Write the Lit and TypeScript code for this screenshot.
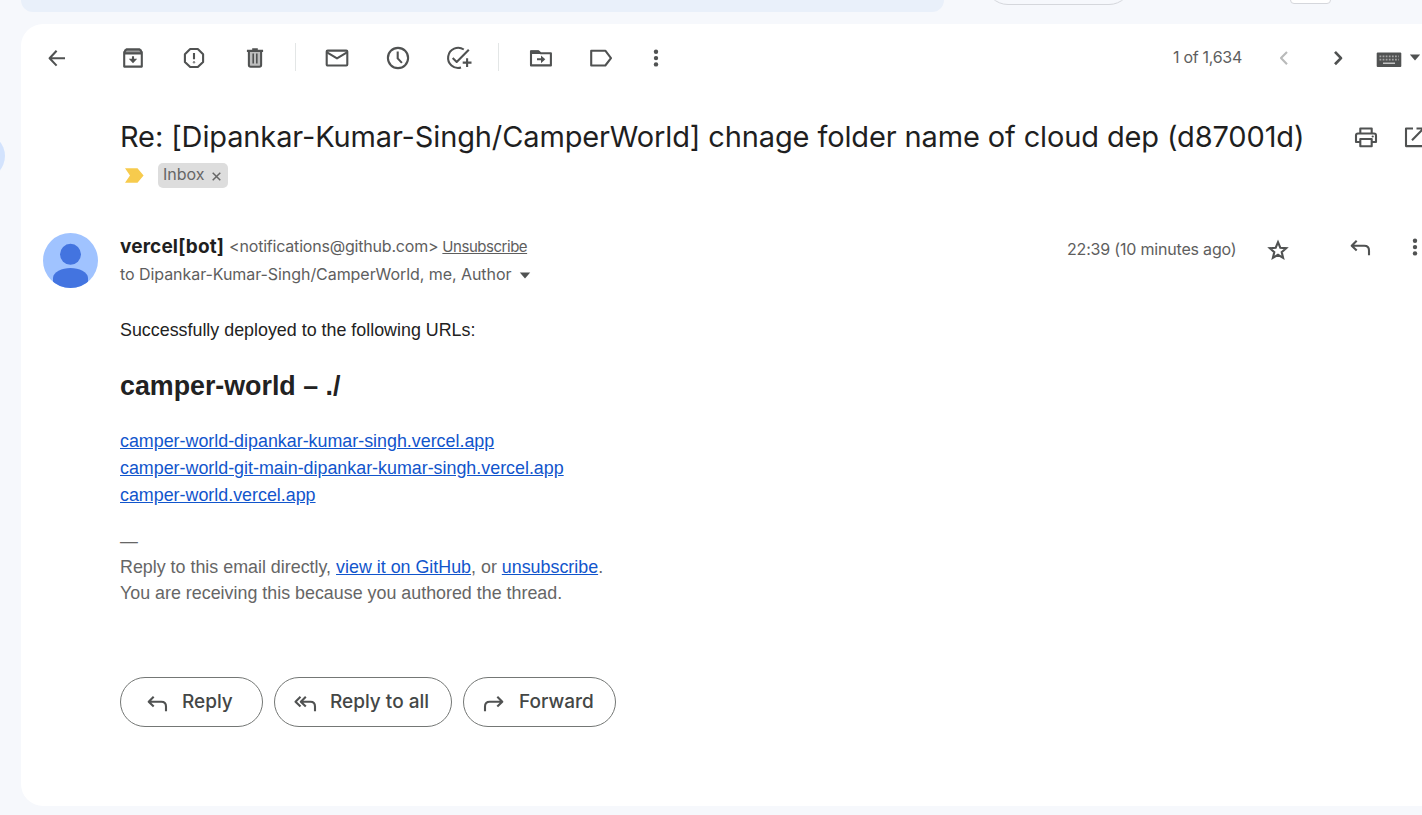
import { LitElement, html, css, svg } from "lit";
import { customElement } from "lit/decorators.js";

// All glyphs are drawn on a 28 x 28 grid.
const glyphs = {
  back: svg`<path class="s" d="M22 14.2H7.2M13.6 6.7L6.6 14.2l7 7.4"/>`,
  archive: svg`<path fill="#9a9b9b" d="M5 5.5h18v4.5H5z"/><path class="s" d="M5.2 8.2L7.4 5.4h13.2l2.2 2.8v14.4H5.2zM5.2 9.4h17.6"/><path class="s" d="M14 12.2v5"/><path class="f" d="M9.8 14.7h8.4L14 19.2z"/>`,
  spam: svg`<path class="s" d="M10.2 5h7.6l5.3 5.3v7.6L17.8 23h-7.6l-5.3-5.1v-7.6z"/><path class="s" d="M14 8.9v6.4"/><circle cx="14" cy="18.3" r="1.2" fill="#888"/>`,
  trash: svg`<path fill="#bcbdbd" d="M9 8h10v14H9z"/><path class="s" d="M5.9 6.9h16.2M7.9 7v14q0 1.7 1.7 1.7h8.8q1.7 0 1.7-1.7V7M11.2 5.2h5.6"/><path class="s thin" d="M12.2 9.5v10M15.8 9.5v10"/>`,
  mail: svg`<rect class="s" x="3.7" y="6.6" width="20.6" height="14.9" rx="1"/><path class="s" d="M4 8.4l10 6 10-6"/>`,
  clock: svg`<circle class="s" cx="14" cy="14" r="10.1"/><path class="s" d="M13.7 7.5v6.9l4.2 4.5"/>`,
  task: svg`<path class="s" d="M18.8 5.5A10.1 10.1 0 1 0 16 23.6M7.7 14l4 3.9L23.8 5.8"/><path class="s" d="M17.7 18.6h8.8M22.1 14.2v8.8"/>`,
  move: svg`<path class="s" d="M4 7.2h7.4l2.2 2h10.3v12.2H4z"/><path class="f" d="M3.5 6.5h8l2.5 3.5H3.5z"/><path class="s" d="M10 15.3h5"/><path class="f" d="M14 11.4l4.3 3.9-4.3 3.9z"/>`,
  label: svg`<path class="s" d="M4.2 6.7h14.1l5.7 7.4-5.7 7.4H4.2z"/>`,
  dots: svg`<circle class="f" cx="14" cy="7.8" r="2.2"/><circle class="f" cx="14" cy="14.1" r="2.2"/><circle class="f" cx="14" cy="20.4" r="2.2"/>`,
  prev: svg`<path class="s pale" d="M17 7.9l-6 6.2 6 6.2"/>`,
  next: svg`<path class="s thick" d="M11 7.9l6 6.2-6 6.2"/>`,
  keyboard: svg`<rect class="f" x="1.7" y="8.5" width="24.6" height="14.6" rx="1"/><path fill="none" stroke="#a5a5a5" stroke-width="1.7" stroke-dasharray="1.8 1.3" d="M4.5 12.4h19.3M4.5 15.6h19.3"/><path fill="none" stroke="#c4c4c4" stroke-width="1.6" d="M8 19.2h12"/>`,
  caret: svg`<path class="f" d="M8.8 10.5h10.4L14 16.6z"/>`,
  print: svg`<path class="s" d="M8.3 10.3V5.5h11.4v4.8M8 19H4V12.5q0-2 2-2h16q2 0 2 2V19h-4"/><rect class="s" x="8.3" y="16" width="11.4" height="7.3"/><circle class="f" cx="20.7" cy="13.5" r="1.1"/>`,
  open: svg`<path class="s" d="M12 5.5H5v17.6h17.6V15M15.5 5.5h7.1v7.1M22.3 5.8L11 17.3"/>`,
  star: svg`<path class="s miter" d="M14 6.2l2.3 5.5 5.9.5-4.5 3.9 1.4 5.8-5.1-3.1-5.1 3.1 1.4-5.8-4.5-3.9 5.9-.5z"/>`,
  reply: svg`<path class="s" d="M10.7 6.8L5.7 11.7l5 4.9M6 11.7h12.3q4.7 0 4.7 4.7v4.8"/>`,
  replyAll: svg`<path class="s" d="M9.5 6.8L4.5 11.7l5 4.9M14.8 6.8L9.8 11.7l5 4.9M10 11.7h9.5q4.5 0 4.5 4.7v4.8"/>`,
  forward: svg`<path class="s" d="M17.3 6.8l5 4.9-5 4.9M22 11.7H9.7Q5 11.7 5 16.4v4.8"/>`,
};

const icon = (name: keyof typeof glyphs) =>
  html`<span class="icon"><svg width="28" height="28" viewBox="0 0 28 28" aria-hidden="true">${glyphs[name]}</svg></span>`;

@customElement("app-root")
export class AppRoot extends LitElement {
  static styles = css`
    :host {
      display: grid;
      grid-template-columns: 21px 1401px;
      grid-template-rows: 24px 782px;
      width: 1422px;
      height: 815px;
      overflow: hidden;
      background: #f6f8fc;
      font-family: Inter, "Liberation Sans", sans-serif;
      font-size: 16px;
      color: #5e5e5e;
      white-space: nowrap;
    }
    .topbar {
      grid-column: 2;
      display: flex;
      align-items: flex-start;
      overflow: hidden;
    }
    .search { width: 923px; height: 60px; margin-top: -48px; border-radius: 12px; background: #e9f0fa; }
    .pill { box-sizing: border-box; width: 147px; height: 46px; margin: -41px 0 0 41px; border: 1px solid #d5d7dc; border-radius: 23px; }
    .box { box-sizing: border-box; width: 41px; height: 40px; margin: -36px 0 0 158px; border: 1px solid #d5d7dc; border-radius: 4px; background: #fff; }
    .rail { grid-row: 2; overflow: hidden; padding-top: 109px; }
    .rail-item { width: 60px; height: 46px; margin-left: -55px; border-radius: 23px; background: #d3e3fd; }
    .card {
      grid-row: 2;
      grid-column: 2;
      overflow: hidden;
      background: #fff;
      border-radius: 22px 0 0 22px;
    }
    .icon { display: flex; align-items: center; justify-content: center; min-width: 0; }
    svg { display: block; flex: none; }
    .s { fill: none; stroke: #505252; stroke-linejoin: round; stroke-width: 2.1; }
    .s.thin { stroke-width: 1.6; }
    .s.thick { stroke-width: 2.7; }
    .s.pale { stroke: #b9baba; }
    .s.miter { stroke-linejoin: miter; }
    .f { fill: #505252; }
    .toolbar {
      display: grid;
      grid-template-columns: 6px 60px 16px 60px 61px 61px 21px 62px 59px 64px 14px 71px 49px 62px 1fr auto 84px 24px 23px 32px 3px 14px;
      height: 66px;
      align-items: center;
    }
    .toolbar .icon { padding-top: 1px; }
    .rule { justify-self: center; width: 1px; height: 28px; background: #e3e6e6; }
    .count { letter-spacing: -0.29px; }
    .subject-row { display: flex; align-items: center; height: 44px; margin-top: 24px; padding-left: 99px; }
    .subject { flex: none; width: 1232px; margin: 0; font-size: 29px; font-weight: 400; letter-spacing: -0.13px; color: #1f1f1f; }
    .subject-row .icon { flex: none; padding-top: 1px; }
    .subject-row .icon:last-child { margin-left: 21px; }
    .labels { display: flex; align-items: center; height: 25px; margin-top: 5px; padding-left: 104px; }
    .tag { display: flex; align-items: center; box-sizing: border-box; width: 70px; height: 25px; margin-left: 14px; padding: 0 6px 3px 5px; border-radius: 5px; background: #ddd; gap: 7px; color: #666; }
    .tag svg { margin-top: 5px; }
    .message { display: grid; grid-template-columns: 77px 1fr auto; margin-top: 45px; padding-left: 22px; }
    .from { display: flex; align-items: baseline; height: 28px; line-height: 28px; }
    .sender { font-size: 19px; font-weight: 700; letter-spacing: 0.14px; color: #1f1f1f; }
    .address { margin-left: 5px; letter-spacing: -0.2px; line-height: 26px; }
    .unsub { margin-left: 4px; font-size: 15px; letter-spacing: -0.47px; text-decoration: underline; }
    .address, .unsub { transform: translateY(-1px); }
    .to { display: flex; height: 28px; line-height: 26px; letter-spacing: -0.06px; }
    .to .icon { margin-top: 1px; }
    .meta { display: flex; align-items: center; height: 33px; width: 355px; }
    .meta .icon { flex: none; }
    .time { flex: none; letter-spacing: -0.19px; width: 197px; padding-bottom: 2px; }
    .meta .icon:nth-child(3) { margin-left: 54px; margin-top: -3px; }
    .meta .icon:nth-child(4) { margin-left: 27px; margin-top: -5px; }
    .body { margin: 28px 0 0 99px; font-family: "Liberation Sans", Arial, sans-serif; font-size: 17.875px; line-height: 27px; color: #222; }
    p { margin: 0; }
    h2 { margin: 24px 0 24px; font-size: 26.8px; line-height: 36px; }
    a { color: #15c; text-decoration: underline; }
    .link { display: block; }
    .foot { margin-top: 19px; line-height: 26px; color: #666; }
    .actions { display: flex; gap: 11px; margin: 71px 0 0 99px; }
    button {
      display: flex;
      align-items: center;
      box-sizing: border-box;
      height: 50px;
      padding: 0 0 2px 22px;
      gap: 11px;
      border: 1px solid #747775;
      border-radius: 25px;
      background: #fff;
      font: 500 19px Inter, sans-serif;
      color: #444746;
    }
    button .icon { margin-top: 5px; }
    .b1 { width: 143px; }
    .b2 { width: 178px; padding-left: 16px; }
    .b3 { width: 153px; padding-left: 16px; }
  `;

  render() {
    return html`
      <div class="topbar"><div class="search"></div><div class="pill"></div><div class="box"></div></div>
      <div class="rail"><div class="rail-item"></div></div>
      <main class="card">
        <div class="toolbar">
          <span></span>${icon("back")}<span></span>${icon("archive")}${icon("spam")}${icon("trash")}
          <span class="rule"></span>${icon("mail")}${icon("clock")}${icon("task")}
          <span class="rule"></span>${icon("move")}${icon("label")}${icon("dots")}
          <span></span><span class="count">1 of 1,634</span>${icon("prev")}${icon("next")}
          <span></span>${icon("keyboard")}<span></span>${icon("caret")}
        </div>
        <div class="subject-row">
          <h1 class="subject">Re: [Dipankar-Kumar-Singh/CamperWorld] chnage folder name of cloud dep (d87001d)</h1>
          ${icon("print")}${icon("open")}
        </div>
        <div class="labels">
          <svg width="19" height="15" viewBox="0 0 19 15"><path fill="#f7cb4d" d="M0 .3h12.5L18.6 7.5 12.5 14.7H0L5 7.5z"/></svg>
          <span class="tag">Inbox<svg width="9" height="9" viewBox="0 0 9 9"><path d="M.7 .7l7.6 7.6M8.3 .7L.7 8.3" stroke="#666" stroke-width="1.5"/></svg></span>
        </div>
        <div class="message">
          <svg width="55" height="55" viewBox="0 0 55 55">
            <defs><clipPath id="round"><circle cx="27.5" cy="27.5" r="27.5"/></clipPath></defs>
            <g clip-path="url(#round)">
              <path fill="#a0c3ff" d="M0 0h55v55H0z"/>
              <circle cx="27.5" cy="21.3" r="10.5" fill="#4374e0"/>
              <path fill="#4374e0" d="M10 55V45c0-6 9-10 17.5-10S45 39 45 45v10z"/>
            </g>
          </svg>
          <div>
            <div class="from"><span class="sender">vercel[bot]</span><span class="address">&lt;notifications@github.com&gt;</span><span class="unsub">Unsubscribe</span></div>
            <div class="to"><span>to Dipankar-Kumar-Singh/CamperWorld, me, Author</span>${icon("caret")}</div>
          </div>
          <div class="meta"><span class="time">22:39 (10 minutes ago)</span>${icon("star")}${icon("reply")}${icon("dots")}</div>
        </div>
        <div class="body">
          <p>Successfully deployed to the following URLs:</p>
          <h2>camper-world – ./</h2>
          <a class="link">camper-world-dipankar-kumar-singh.vercel.app</a>
          <a class="link">camper-world-git-main-dipankar-kumar-singh.vercel.app</a>
          <a class="link">camper-world.vercel.app</a>
          <div class="foot">—<br />Reply to this email directly, <a>view it on GitHub</a>, or <a>unsubscribe</a>.<br />You are receiving this because you authored the thread.</div>
        </div>
        <div class="actions">
          <button class="b1">${icon("reply")}Reply</button>
          <button class="b2">${icon("replyAll")}Reply to all</button>
          <button class="b3">${icon("forward")}Forward</button>
        </div>
      </main>
    `;
  }
}
